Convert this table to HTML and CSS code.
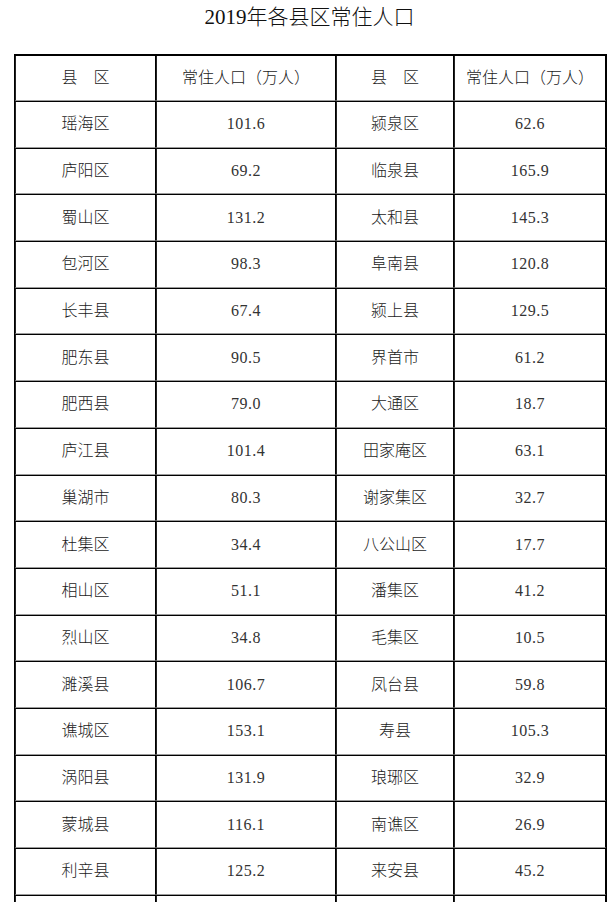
FILE: index.html
```html
<!DOCTYPE html>
<html lang="zh-CN">
<head>
<meta charset="utf-8">
<title>2019年各县区常住人口</title>
<link rel="stylesheet" href="styles.css">
</head>
<body>
<div class="page">
  <h1 class="title">2019年各县区常住人口</h1>
  <table class="pop">
    <colgroup>
      <col class="c1"><col class="c2"><col class="c3"><col class="c4">
    </colgroup>
    <thead>
      <tr class="head"><td>县　区</td><td>常住人口（万人）</td><td>县　区</td><td>常住人口（万人）</td></tr>
    </thead>
    <tbody>
      <tr><td>瑶海区</td><td class="num">101.6</td><td>颍泉区</td><td class="num">62.6</td></tr>
      <tr><td>庐阳区</td><td class="num">69.2</td><td>临泉县</td><td class="num">165.9</td></tr>
      <tr><td>蜀山区</td><td class="num">131.2</td><td>太和县</td><td class="num">145.3</td></tr>
      <tr><td>包河区</td><td class="num">98.3</td><td>阜南县</td><td class="num">120.8</td></tr>
      <tr><td>长丰县</td><td class="num">67.4</td><td>颍上县</td><td class="num">129.5</td></tr>
      <tr><td>肥东县</td><td class="num">90.5</td><td>界首市</td><td class="num">61.2</td></tr>
      <tr><td>肥西县</td><td class="num">79.0</td><td>大通区</td><td class="num">18.7</td></tr>
      <tr><td>庐江县</td><td class="num">101.4</td><td>田家庵区</td><td class="num">63.1</td></tr>
      <tr><td>巢湖市</td><td class="num">80.3</td><td>谢家集区</td><td class="num">32.7</td></tr>
      <tr><td>杜集区</td><td class="num">34.4</td><td>八公山区</td><td class="num">17.7</td></tr>
      <tr><td>相山区</td><td class="num">51.1</td><td>潘集区</td><td class="num">41.2</td></tr>
      <tr><td>烈山区</td><td class="num">34.8</td><td>毛集区</td><td class="num">10.5</td></tr>
      <tr><td>濉溪县</td><td class="num">106.7</td><td>凤台县</td><td class="num">59.8</td></tr>
      <tr><td>谯城区</td><td class="num">153.1</td><td>寿县</td><td class="num">105.3</td></tr>
      <tr><td>涡阳县</td><td class="num">131.9</td><td>琅琊区</td><td class="num">32.9</td></tr>
      <tr><td>蒙城县</td><td class="num">116.1</td><td>南谯区</td><td class="num">26.9</td></tr>
      <tr><td>利辛县</td><td class="num">125.2</td><td>来安县</td><td class="num">45.2</td></tr>
      <tr><td></td><td></td><td></td><td></td></tr>
    </tbody>
  </table>
</div>
</body>
</html>
```

FILE: styles.css
```css
html, body {
  margin: 0;
  padding: 0;
  background: #fff;
}

.page {
  padding: 0 10px 0 14px;
  font-family: "Liberation Serif", "Noto Sans CJK SC", serif;
  color: #111;
}

.title {
  margin: 0;
  height: 54px;
  padding-top: 5px;
  box-sizing: border-box;
  text-align: center;
  font-size: 21px;
  line-height: 24px;
  font-weight: 300;
}

.pop {
  width: 591px;
  table-layout: fixed;
  border-collapse: separate;
  border-spacing: 0;
  border-top: 2px solid #000;
  border-left: 1px solid #000;
  border-right: 1px solid #000;
}

.c1 { width: 141px; }
.c2 { width: 180px; }
.c3 { width: 118px; }
.c4 { width: 152px; }

.pop td {
  padding: 0;
  text-align: center;
  vertical-align: middle;
  font-size: 16px;
  line-height: 20px;
  font-weight: 300;
  color: #1a1a1a;
  border-left: 1px solid #222;
  border-top: 1px solid #000;
  border-bottom: 1px solid #9a9a9a;
  border-right: 1px solid #000;
}

.pop td.num {
  letter-spacing: 0.5px;
  color: #333;
}

.pop tr.head td {
  border-top: none;
}

.pop tr.head {
  height: 45px;
}

.pop tbody tr {
  height: 46.7px;
}
```
